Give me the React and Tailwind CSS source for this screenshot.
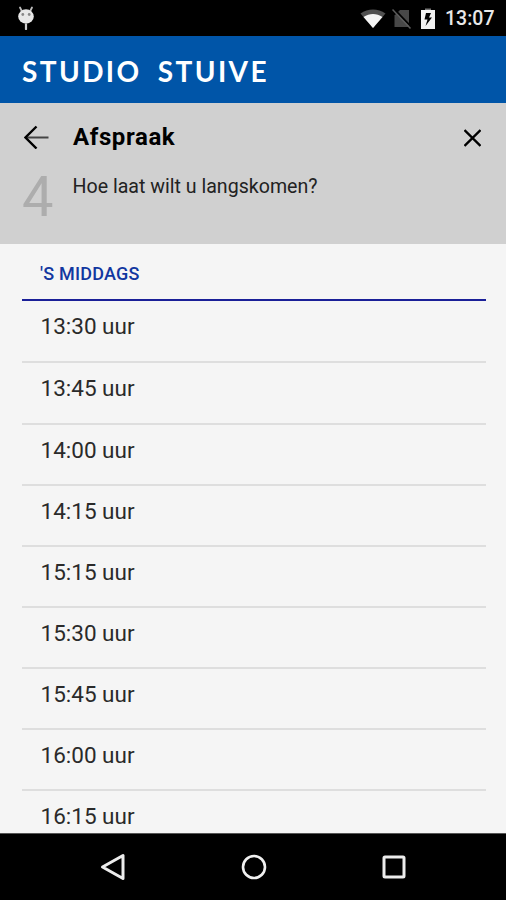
const timeSlots = [
  '13:30',
  '13:45',
  '14:00',
  '14:15',
  '15:15',
  '15:30',
  '15:45',
  '16:00',
  '16:15',
];

const StatusBar = () => (
  <div className="h-9 shrink-0 bg-black flex items-center justify-between pl-[17px] pr-[11px]">
    <svg className="w-[18px] h-6" viewBox="0 0 18 24">
      <path d="M3 1.500l2 4M15 1.500l-2 4" stroke="#bdbdbd" strokeWidth="1.800" strokeLinecap="round" />
      <ellipse cx="9" cy="10.500" rx="7.800" ry="7.200" fill="#e8e8e8" />
      <circle cx="5.800" cy="8.500" r="1.400" fill="#888" />
      <circle cx="12.200" cy="8.500" r="1.400" fill="#888" />
      <path d="M9 18.500v4.500" stroke="#cfcfcf" strokeWidth="2.200" strokeLinecap="round" />
    </svg>

    <div className="flex items-center pt-[2px]">
      {/* Wifi */}
      <svg className="w-[26px] h-5" viewBox="0 0 26 20">
        <path d="M0.500 4.500C8-1 18-1 25.500 4.500L13 19z" fill="#505050" />
        <path d="M3.500 8C9.500 4 16.500 4 22.500 8L13 19z" fill="#f5f5f5" />
      </svg>
      {/* No sim */}
      <svg className="w-5 h-[22px] ml-[6px]" viewBox="0 0 20 22">
        <path d="M8 2h9v17H2.500V7.500z" fill="#484848" />
        <path d="M2 1L20 19.500" stroke="#000" strokeWidth="1.800" />
        <path d="M0.500 1.500L18.500 20.500" stroke="#5c5c5c" strokeWidth="1.500" />
      </svg>
      {/* Battery charging */}
      <svg className="w-[14px] h-[22px] ml-[9px]" viewBox="0 0 14 22">
        <path d="M4 0.500h6v1.500H4z" fill="#777" />
        <path d="M0 2h14v19H0z" fill="#f2f2f2" />
        <path d="M10 5H5L3.500 11.500h3L4.500 18l6.500-8.500H8z" fill="#000" />
      </svg>
      <span className="ml-[10px] w-[50px] text-[19.5px] leading-6 font-medium text-[#e8e8e8] whitespace-nowrap">
        13:07
      </span>
    </div>
  </div>
);

const NavigationBar = () => (
  <div className="h-[67px] shrink-0 bg-black border-t border-[#555] flex justify-between pl-[99px] pr-[98px] pt-[19px]">
    <svg className="w-7 h-7" viewBox="0 0 28 28" fill="none" stroke="#ececec" strokeWidth="3" strokeLinejoin="round">
      <path d="M24 2.500v23L3.500 14z" />
    </svg>
    <svg className="w-7 h-7" viewBox="0 0 28 28" fill="none" stroke="#f0f0f0" strokeWidth="2.600">
      <circle cx="14" cy="14" r="11" />
    </svg>
    <svg className="w-7 h-7" viewBox="0 0 28 28" fill="none" stroke="#ececec" strokeWidth="3">
      <rect x="4" y="4" width="20" height="20" rx="1" />
    </svg>
  </div>
);

const App = () => {
  return (
    <div className="w-full h-[900px] flex flex-col overflow-hidden bg-[#f5f5f5] font-['Roboto',sans-serif]">
      <StatusBar />

      <header className="h-[67px] shrink-0 bg-[#0055a8] flex items-center pl-[22px] pt-[2px]">
        <span className="font-['Lato',sans-serif] font-bold text-[28px] leading-8 tracking-[2.4px] [word-spacing:7px] text-white whitespace-nowrap">
          STUDIO STUIVE
        </span>
      </header>

      <section className="h-[141px] shrink-0 bg-[#d0d0d0]">
        <div className="flex items-center h-[68px] pl-[24px] pr-[25px]">
          <svg className="w-[25px] h-6" viewBox="0 0 25 24" fill="none" stroke="#000">
            <path d="M2 12.500h22.500" stroke="#444" strokeWidth="2" />
            <path d="M12.500 1.500L1.500 12.500l11 11" strokeWidth="2.400" />
          </svg>
          <h1 className="ml-[24px] flex-1 text-[24px] leading-8 font-bold tracking-[0.6px] text-black">Afspraak</h1>
          <svg className="w-[17px] h-[18px] mt-px" viewBox="0 0 17 18" fill="none" stroke="#000" strokeWidth="2.400">
            <path d="M0.500 1l16 16M16.500 1l-16 16" />
          </svg>
        </div>
        <div className="flex pl-[22px]">
          <span className="w-[50.5px] text-[56px] leading-[53px] text-[#adadad]">4</span>
          <p className="pt-1 text-[19.6px] leading-6 text-[#222]">Hoe laat wilt u langskomen?</p>
        </div>
      </section>

      <main className="flex-1 min-h-0 overflow-hidden pl-[22px] pr-[20px]">
        <h2 className="h-[57px] border-b-2 border-[#1a1f98] pl-[18px] pt-[18px] text-[18px] leading-6 font-medium tracking-[0.2px] text-[#1237a0]">
          'S MIDDAGS
        </h2>
        <ul>
          {timeSlots.map((time, index) => (
            <li
              key={time}
              className={`${index < 2 ? 'h-[62px]' : 'h-[61px]'} border-b-2 border-[#dedede] pl-[18.5px] pt-[9px] text-[22.5px] leading-8 text-[#2a2a2a]`}
            >
              {time} uur
            </li>
          ))}
        </ul>
      </main>

      <NavigationBar />
    </div>
  );
};

export default App;
